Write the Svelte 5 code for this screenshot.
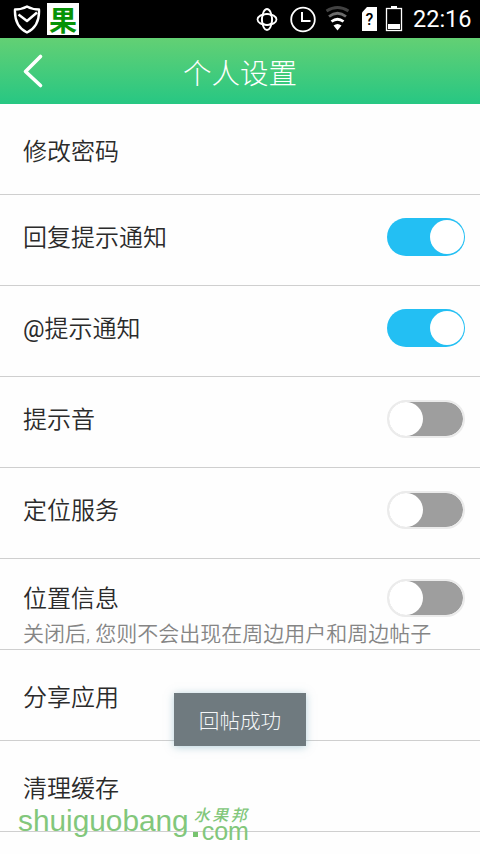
<script lang="ts">
  type Setting = { prefix?: string; label: string; note?: string; on?: boolean };

  let settings = $state<Setting[]>([
    { label: "修改密码" },
    { label: "回复提示通知", on: true },
    { prefix: "@", label: "提示通知", on: true },
    { label: "提示音", on: false },
    { label: "定位服务", on: false },
    { label: "位置信息", on: false, note: "关闭后, 您则不会出现在周边用户和周边帖子" },
    { label: "分享应用" },
    { label: "清理缓存" }
  ]);
</script>

<div class="screen">
  <div class="status-bar">
    <svg class="shield" width="28" height="30" viewBox="0 0 28 30" fill="none" stroke="#fff" stroke-width="2.4" stroke-linejoin="round">
      <path d="M14 1.5C10.5 3.5 6 4.5 2 4.5C1.5 15 5 23 14 27.5C23 23 26.5 15 26 4.5C22 4.5 17.5 3.5 14 1.5Z" />
      <path d="M5.5 9.5L14 16L24 7.5" />
    </svg>
    <span class="app-badge">果</span>
    <svg class="tray" width="150" height="38" viewBox="0 0 150 38" fill="none" stroke="#fff">
      <g stroke-width="1.8">
        <ellipse cx="12" cy="19.5" rx="9.5" ry="5.5" />
        <ellipse cx="12" cy="19.5" rx="5" ry="10.5" />
        <circle cx="12" cy="19.5" r="5.5" stroke-width="1.2" />
      </g>
      <circle cx="48" cy="19.5" r="11.8" stroke-width="1.8" />
      <path d="M47 12V21H55.5" stroke-width="2" />
      <g stroke-width="2.8">
        <path d="M71.5 11Q82.5 4 93.500 11" stroke="#424242" />
        <path d="M74 16.500Q82.500 10 91 16.500" stroke="#6b6b6b" />
        <path d="M76.500 21.500Q82.500 17 88.500 21.500" />
      </g>
      <path d="M78.500 25.500Q82.500 22.500 86.500 25.500L82.500 30.500Z" fill="#fff" stroke="none" />
      <path d="M112 7H122V31H107V12.5Z" fill="#fff" stroke="none" />
      <text x="114.5" y="25" text-anchor="middle">?</text>
      <rect x="131.5" y="8.5" width="15" height="22" stroke-width="1.3" />
      <path d="M136 6H142V8H136ZM133 24H145V29H133Z" fill="#fff" stroke="none" />
    </svg>
    <span class="time">22:16</span>
  </div>

  <header>
    <button class="back" aria-label="返回">
      <svg width="24" height="36" viewBox="0 0 24 36" fill="none" stroke="#fff" stroke-width="3.6" stroke-linecap="round" stroke-linejoin="round">
        <path d="M19.5 3.5L4.5 18.5L19.5 32.5" />
      </svg>
    </button>
    <h1>个人设置</h1>
  </header>

  <main>
    {#each settings as item}
      <div class="row" class:plain={item.on === undefined} class:with-note={item.note}>
        <div class="line">
          <span class="label">{#if item.prefix}<span class="prefix">{item.prefix}</span>{/if}{item.label}</span>
          {#if item.on !== undefined}
            <button
              class="switch"
              class:on={item.on}
              role="switch"
              aria-checked={item.on}
              aria-label={item.label}
              onclick={() => (item.on = !item.on)}
            >
              <span class="knob"></span>
            </button>
          {/if}
        </div>
        {#if item.note}
          <p>{item.note}</p>
        {/if}
      </div>
    {/each}
  </main>

  <div class="toast">回帖成功</div>

  <div class="watermark">
    <span class="site">shuiguobang</span>
    <span class="dot"></span>
    <span class="suffix">
      <span class="brand">水果邦</span>
      <span class="com">com</span>
    </span>
  </div>
</div>

<style>
  :global(body) {
    margin: 0;
    overflow: hidden;
  }

  .screen {
    position: relative;
    width: 480px;
    height: 854px;
    overflow: hidden;
    background: #fefefe;
    color: #2b2b2b;
    font-family: Roboto, "Noto Sans CJK SC", sans-serif;
  }

  .status-bar {
    display: flex;
    align-items: center;
    box-sizing: border-box;
    height: 38px;
    padding-left: 13px;
    background: #000;
    color: #fff;
  }

  .shield {
    margin-top: 1px;
  }

  .app-badge {
    width: 32px;
    height: 32px;
    margin-left: 6px;
    background: #fff;
    color: #079307;
    font-family: "Noto Sans CJK SC", sans-serif;
    font-size: 28px;
    font-weight: 700;
    line-height: 32px;
    text-align: center;
  }

  .tray {
    margin-left: 176px;
  }

  .tray text {
    fill: #000;
    stroke: none;
    font-size: 16px;
    font-weight: 500;
  }

  .time {
    margin-left: 8px;
    font-size: 23.5px;
    line-height: 40px;
  }

  header {
    display: grid;
    grid-template-columns: 64px 1fr 64px;
    align-items: center;
    height: 66px;
    background: linear-gradient(#63d074, #27c783);
    color: #fff;
  }

  button {
    padding: 0;
    border: 0;
    background: none;
  }

  .back {
    display: flex;
    margin-left: 21px;
  }

  h1 {
    margin: 7px 0 0;
    font-size: 28.5px;
    font-weight: 300;
    line-height: 40px;
    text-align: center;
  }

  .row {
    box-sizing: border-box;
    height: 91px;
    padding: 23px 15px 0 23px;
    border-bottom: 1px solid #cfcfcf;
  }

  .row.plain {
    padding-top: 28px;
  }

  .row.with-note {
    padding-top: 20px;
  }

  .line {
    display: flex;
    align-items: center;
    justify-content: space-between;
    height: 38px;
  }

  .label {
    padding-top: 2px;
    font-size: 24px;
    font-weight: 350;
    line-height: 38px;
  }

  .prefix {
    font-weight: 400;
  }

  p {
    margin: 0;
    color: #858585;
    font-size: 21px;
    font-weight: 350;
    line-height: 35px;
    white-space: nowrap;
  }

  .switch {
    display: flex;
    align-items: center;
    box-sizing: border-box;
    width: 78px;
    height: 38px;
    border: 2px solid #ebebeb;
    border-radius: 19px;
    background: #9e9e9e;
    background-clip: padding-box;
  }

  .switch.on {
    justify-content: flex-end;
    padding-right: 1px;
    border: 0;
    background: #23bff3;
  }

  .knob {
    width: 34px;
    height: 34px;
    border-radius: 50%;
    background: #fff;
  }

  .toast {
    position: absolute;
    top: 693px;
    left: 174px;
    width: 132px;
    height: 53px;
    background: #6f7a7f;
    box-shadow: 0 1px 8px rgba(110, 165, 185, 0.5);
    color: #f4f6f7;
    font-size: 20.6px;
    font-weight: 300;
    line-height: 59px;
    text-align: center;
  }

  .watermark {
    position: absolute;
    top: 802px;
    left: 18px;
    display: flex;
    height: 42px;
    color: #82c77b;
    font-family: "Liberation Sans", sans-serif;
  }

  .site {
    font-size: 29.8px;
    line-height: 38px;
  }

  .dot {
    align-self: flex-end;
    width: 5px;
    height: 5px;
    margin: 0 4px 7px 4px;
    background: #77c36f;
  }

  .suffix {
    display: flex;
    flex-direction: column;
  }

  .brand {
    height: 18px;
    margin-left: -8px;
    font-family: "Noto Sans CJK SC", sans-serif;
    font-size: 16px;
    font-style: italic;
    font-weight: 500;
    letter-spacing: 2.5px;
    line-height: 24px;
  }

  .com {
    font-size: 25px;
    line-height: 22px;
  }
</style>
